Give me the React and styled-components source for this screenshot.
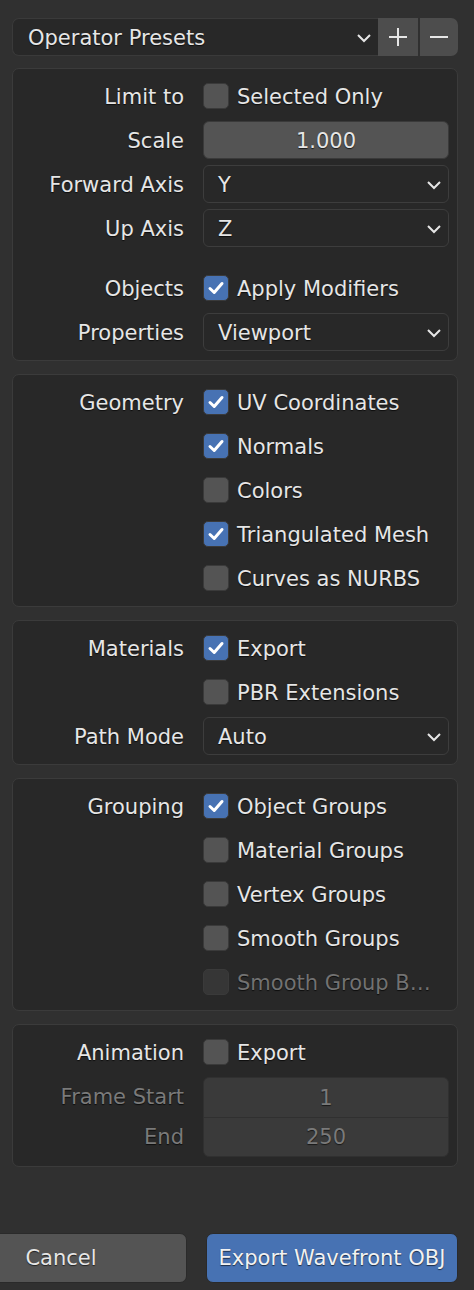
import React from "react";
import styled, { createGlobalStyle } from "styled-components";

const Global = createGlobalStyle`
  html, body { margin: 0; padding: 0; background: #303030; overflow: hidden; }
  body { font-family: "DejaVu Sans", "Noto Sans", sans-serif; font-size: 21px; color: #e6e6e6; }
`;

const Page = styled.div`
  width: 474px;
  height: 1290px;
  box-sizing: border-box;
  padding: 18px 16px 0 12px;
  display: flex;
  flex-direction: column;
`;

const PresetRow = styled.div`
  display: flex;
  height: 38px;
  margin-bottom: 12px;
`;

const PresetSelect = styled.div`
  flex: 1;
  display: flex;
  align-items: center;
  justify-content: space-between;
  background: #282828;
  border: 1px solid #3a3a3a;
  border-right: none;
  border-radius: 7px 0 0 7px;
  padding: 1px 5px 0 15px;
  text-shadow: 0 1px 1px rgba(0,0,0,0.7);
`;

const IconBtn = styled.div`
  width: ${p => p.$w}px;
  display: flex;
  align-items: center;
  justify-content: center;
  background: #4d4d4d;
  border-radius: ${p => (p.$last ? "0 7px 7px 0" : "0")};
  margin-left: ${p => (p.$gap ? 2 : 0)}px;
`;

const Panels = styled.div`
  display: flex;
  flex-direction: column;
  gap: 13px;
`;

const Panel = styled.div`
  background: #282828;
  border: 1px solid #3b3b3b;
  border-radius: 7px;
  padding: 8px 10px 9px 10px;
  display: grid;
  grid-template-columns: 161px 246px;
  column-gap: 19px;
  row-gap: 6px;
`;

const Label = styled.div`
  grid-column: 1;
  height: ${p => p.$h || 38}px;
  box-sizing: border-box;
  padding-top: 1px;
  display: flex;
  align-items: center;
  justify-content: flex-end;
  color: ${p => (p.$dim ? "#7a7a7a" : "#e6e6e6")};
  text-shadow: 0 1px 1px rgba(0,0,0,0.7);
  white-space: nowrap;
  margin-top: ${p => p.$mt || 0}px;
`;

const Cell = styled.div`
  grid-column: 2;
  height: 38px;
  display: flex;
  align-items: center;
  margin-top: ${p => p.$mt || 0}px;
`;

const Box = styled.div`
  width: 26px;
  height: 26px;
  box-sizing: border-box;
  border-radius: 5px;
  border: 1px solid #3a3a3a;
  background: ${p => (p.$checked ? "#4772b3" : p.$dim ? "#363636" : "#545454")};
  display: flex;
  align-items: center;
  justify-content: center;
  flex: none;
`;

const CheckText = styled.span`
  margin-left: 8px;
  padding-top: 1px;
  color: ${p => (p.$dim ? "#727272" : "#e6e6e6")};
  text-shadow: 0 1px 1px rgba(0,0,0,0.7);
  white-space: nowrap;
`;

const NumberField = styled.div`
  width: 100%;
  height: 38px;
  box-sizing: border-box;
  padding-top: 1px;
  background: #545454;
  border: 1px solid #3a3a3a;
  border-radius: 6px;
  display: flex;
  align-items: center;
  justify-content: center;
  color: #e6e6e6;
  text-shadow: 0 1px 1px rgba(0,0,0,0.7);
`;

const Select = styled.div`
  width: 100%;
  height: 38px;
  box-sizing: border-box;
  background: #282828;
  border: 1px solid #3d3d3d;
  border-radius: 6px;
  display: flex;
  align-items: center;
  justify-content: space-between;
  padding: 1px 5px 0 14px;
  color: #e6e6e6;
  text-shadow: 0 1px 1px rgba(0,0,0,0.7);
`;

const StackGroup = styled.div`
  grid-column: 2;
  grid-row: span 2;
  display: flex;
  flex-direction: column;
  background: #3a3a3a;
  border: 1px solid #303030;
  border-radius: 6px;
  overflow: hidden;
`;

const StackItem = styled.div`
  height: 39px;
  display: flex;
  align-items: center;
  justify-content: center;
  color: #7a7a7a;
  text-shadow: 0 1px 1px rgba(0,0,0,0.6);
  border-top: ${p => (p.$sep ? "1px solid #303030" : "none")};
  box-sizing: border-box;
`;

const Footer = styled.div`
  display: flex;
  gap: 19px;
  margin-top: 66px;
  margin-left: -77px;
`;

const Button = styled.div`
  width: 252px;
  height: 50px;
  box-sizing: border-box;
  border-radius: 7px;
  border: 1px solid #2a2a2a;
  background: ${p => (p.$primary ? "#4772b3" : "#545454")};
  color: ${p => (p.$primary ? "#f2f2f2" : "#e6e6e6")};
  display: flex;
  align-items: center;
  justify-content: center;
  text-shadow: 0 1px 1px rgba(0,0,0,0.6);
  white-space: nowrap;
`;

const Chevron = () => (
  <svg width="18" height="12" viewBox="0 0 18 12">
    <path d="M3 3 L9 9 L15 3" fill="none" stroke="#e6e6e6" strokeWidth="2" />
  </svg>
);

const Check = () => (
  <svg width="20" height="20" viewBox="0 0 20 20">
    <path d="M4 10.5 L8.2 14.5 L16 5.5" fill="none" stroke="#ffffff" strokeWidth="3" strokeLinecap="round" strokeLinejoin="round" />
  </svg>
);

const CheckBox = ({ checked, dim, children }) => (
  <>
    <Box $checked={checked} $dim={dim}>{checked && <Check />}</Box>
    <CheckText $dim={dim}>{children}</CheckText>
  </>
);

export default function App() {
  return (
    <>
      <Global />
      <Page>
        <PresetRow>
          <PresetSelect>
            <span>Operator Presets</span>
            <Chevron />
          </PresetSelect>
          <IconBtn $w={40}>
            <svg width="20" height="20" viewBox="0 0 20 20">
              <path d="M10 1 V19 M1 10 H19" stroke="#e6e6e6" strokeWidth="2" />
            </svg>
          </IconBtn>
          <IconBtn $w={38} $gap $last>
            <svg width="20" height="20" viewBox="0 0 20 20">
              <path d="M1 10 H19" stroke="#e6e6e6" strokeWidth="2" />
            </svg>
          </IconBtn>
        </PresetRow>

        <Panels>
          <Panel>
            <Label>Limit to</Label>
            <Cell><CheckBox>Selected Only</CheckBox></Cell>
            <Label>Scale</Label>
            <Cell><NumberField>1.000</NumberField></Cell>
            <Label>Forward Axis</Label>
            <Cell><Select><span>Y</span><Chevron /></Select></Cell>
            <Label>Up Axis</Label>
            <Cell><Select><span>Z</span><Chevron /></Select></Cell>
            <Label $mt={16}>Objects</Label>
            <Cell $mt={16}><CheckBox checked>Apply Modifiers</CheckBox></Cell>
            <Label>Properties</Label>
            <Cell><Select><span>Viewport</span><Chevron /></Select></Cell>
          </Panel>

          <Panel>
            <Label>Geometry</Label>
            <Cell><CheckBox checked>UV Coordinates</CheckBox></Cell>
            <Cell><CheckBox checked>Normals</CheckBox></Cell>
            <Cell><CheckBox>Colors</CheckBox></Cell>
            <Cell><CheckBox checked>Triangulated Mesh</CheckBox></Cell>
            <Cell><CheckBox>Curves as NURBS</CheckBox></Cell>
          </Panel>

          <Panel>
            <Label>Materials</Label>
            <Cell><CheckBox checked>Export</CheckBox></Cell>
            <Cell><CheckBox>PBR Extensions</CheckBox></Cell>
            <Label>Path Mode</Label>
            <Cell><Select><span>Auto</span><Chevron /></Select></Cell>
          </Panel>

          <Panel>
            <Label>Grouping</Label>
            <Cell><CheckBox checked>Object Groups</CheckBox></Cell>
            <Cell><CheckBox>Material Groups</CheckBox></Cell>
            <Cell><CheckBox>Vertex Groups</CheckBox></Cell>
            <Cell><CheckBox>Smooth Groups</CheckBox></Cell>
            <Cell><CheckBox dim>Smooth Group B…</CheckBox></Cell>
          </Panel>

          <Panel>
            <Label>Animation</Label>
            <Cell><CheckBox>Export</CheckBox></Cell>
            <Label $dim $h={39}>Frame Start</Label>
            <StackGroup>
              <StackItem>1</StackItem>
              <StackItem $sep>250</StackItem>
            </StackGroup>
            <Label $dim $h={39} $mt={-6}>End</Label>
          </Panel>
        </Panels>

        <Footer>
          <Button>Cancel</Button>
          <Button $primary>Export Wavefront OBJ</Button>
        </Footer>
      </Page>
    </>
  );
}
